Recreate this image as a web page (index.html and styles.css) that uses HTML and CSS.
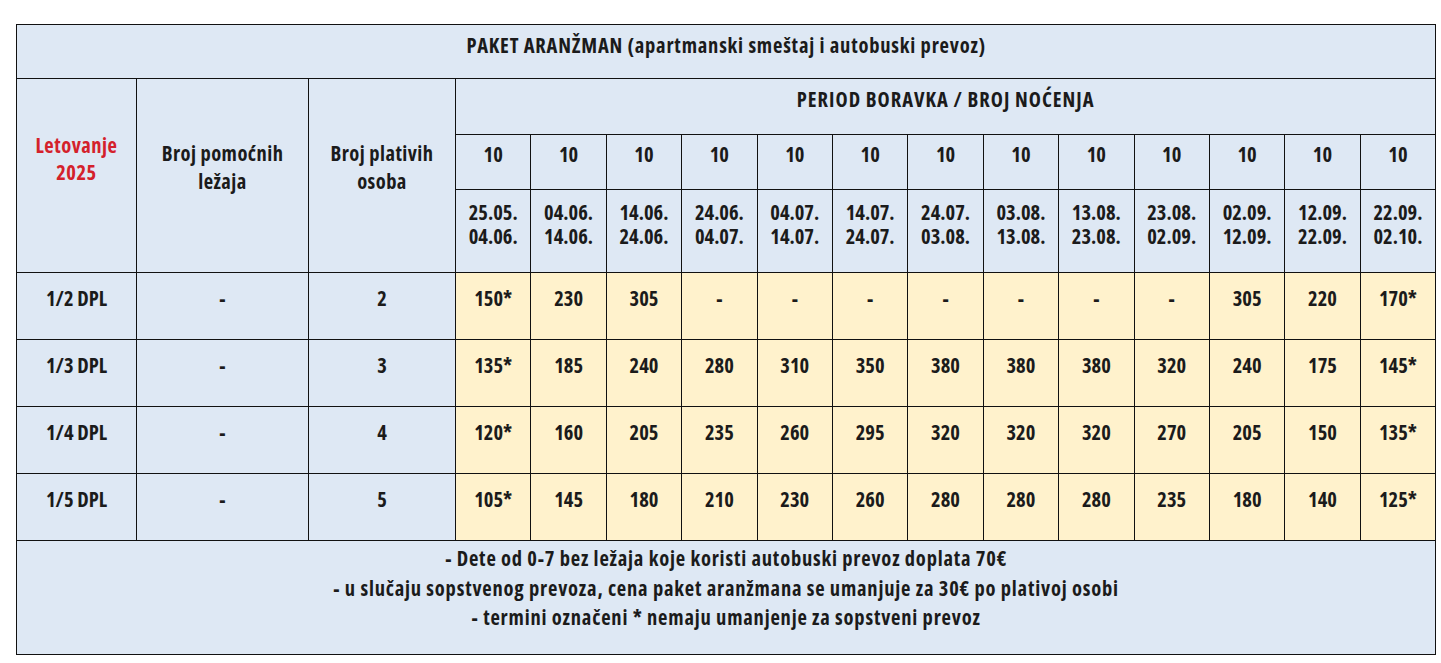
FILE: index.html
```html
<!DOCTYPE html>
<html lang="sr">
<head>
<meta charset="utf-8">
<title>Paket aranžman</title>
<link rel="stylesheet" href="styles.css">
</head>
<body>
<div class="wrap">
<table class="price">
<colgroup>
<col class="c1"><col class="c2"><col class="c3">
<col span="13" class="cd">
</colgroup>
<tbody>
<tr class="r-title"><td colspan="16" class="blue title">PAKET ARANŽMAN (apartmanski smeštaj i autobuski prevoz)</td></tr>
<tr class="r-period">
<td rowspan="3" class="blue red side">Letovanje<br>2025</td>
<td rowspan="3" class="blue side2">Broj pomoćnih<br>ležaja</td>
<td rowspan="3" class="blue side2">Broj plativih<br>osoba</td>
<td colspan="13" class="blue period">PERIOD BORAVKA / BROJ NOĆENJA</td>
</tr>
<tr class="r-nights">
<td class="blue n">10</td><td class="blue n">10</td><td class="blue n">10</td><td class="blue n">10</td><td class="blue n">10</td><td class="blue n">10</td><td class="blue n">10</td><td class="blue n">10</td><td class="blue n">10</td><td class="blue n">10</td><td class="blue n">10</td><td class="blue n">10</td><td class="blue n">10</td>
</tr>
<tr class="r-dates">
<td class="blue d">25.05.<br>04.06.</td><td class="blue d">04.06.<br>14.06.</td><td class="blue d">14.06.<br>24.06.</td><td class="blue d">24.06.<br>04.07.</td><td class="blue d">04.07.<br>14.07.</td><td class="blue d">14.07.<br>24.07.</td><td class="blue d">24.07.<br>03.08.</td><td class="blue d">03.08.<br>13.08.</td><td class="blue d">13.08.<br>23.08.</td><td class="blue d">23.08.<br>02.09.</td><td class="blue d">02.09.<br>12.09.</td><td class="blue d">12.09.<br>22.09.</td><td class="blue d">22.09.<br>02.10.</td>
</tr>
<tr class="r-data">
<td class="blue v">1/2 DPL</td><td class="blue v">-</td><td class="blue v">2</td>
<td class="yel v">150*</td><td class="yel v">230</td><td class="yel v">305</td><td class="yel v">-</td><td class="yel v">-</td><td class="yel v">-</td><td class="yel v">-</td><td class="yel v">-</td><td class="yel v">-</td><td class="yel v">-</td><td class="yel v">305</td><td class="yel v">220</td><td class="yel v">170*</td>
</tr>
<tr class="r-data">
<td class="blue v">1/3 DPL</td><td class="blue v">-</td><td class="blue v">3</td>
<td class="yel v">135*</td><td class="yel v">185</td><td class="yel v">240</td><td class="yel v">280</td><td class="yel v">310</td><td class="yel v">350</td><td class="yel v">380</td><td class="yel v">380</td><td class="yel v">380</td><td class="yel v">320</td><td class="yel v">240</td><td class="yel v">175</td><td class="yel v">145*</td>
</tr>
<tr class="r-data">
<td class="blue v">1/4 DPL</td><td class="blue v">-</td><td class="blue v">4</td>
<td class="yel v">120*</td><td class="yel v">160</td><td class="yel v">205</td><td class="yel v">235</td><td class="yel v">260</td><td class="yel v">295</td><td class="yel v">320</td><td class="yel v">320</td><td class="yel v">320</td><td class="yel v">270</td><td class="yel v">205</td><td class="yel v">150</td><td class="yel v">135*</td>
</tr>
<tr class="r-data">
<td class="blue v">1/5 DPL</td><td class="blue v">-</td><td class="blue v">5</td>
<td class="yel v">105*</td><td class="yel v">145</td><td class="yel v">180</td><td class="yel v">210</td><td class="yel v">230</td><td class="yel v">260</td><td class="yel v">280</td><td class="yel v">280</td><td class="yel v">280</td><td class="yel v">235</td><td class="yel v">180</td><td class="yel v">140</td><td class="yel v">125*</td>
</tr>
<tr class="r-foot">
<td colspan="16" class="blue foot">- Dete od 0-7 bez ležaja koje koristi autobuski prevoz doplata 70€<br>- u slučaju sopstvenog prevoza, cena paket aranžmana se umanjuje za 30€ po plativoj osobi<br>- termini označeni * nemaju umanjenje za sopstveni prevoz</td>
</tr>
</tbody>
</table>
</div>
</body>
</html>
```

FILE: styles.css
```css
html, body {
  margin: 0;
  padding: 0;
  background: #ffffff;
}
.wrap {
  padding: 24px 0 0 16px;
}
.price {
  border-collapse: collapse;
  table-layout: fixed;
  width: 1419px;
  font-family: "Open Sans", "DejaVu Sans Condensed", sans-serif;
  font-stretch: 82%;
  font-weight: 700;
  font-size: 20.5px;
  color: #1b1b1b;
}
.c1 { width: 120px; }
.c2 { width: 172px; }
.c3 { width: 147px; }
.cd { width: 75.4px; }
.price td {
  box-sizing: border-box;
  border: 1px solid #111;
  text-align: center;
  vertical-align: top;
  padding: 0;
  line-height: 24px;
}
.blue { background: #dee8f4; }
.yel { background: #fff2cc; }
.red { color: #d4212b; }
.r-title td { height: 54px; padding-top: 8px; letter-spacing: 0.8px; }
.r-period td.period { height: 56px; padding-top: 8px; letter-spacing: 1px; }
.r-nights td { height: 55px; padding-top: 7px; }
.r-dates td { height: 83px; padding-top: 10px; }
.price td.side { padding-top: 53px; line-height: 27px; letter-spacing: 0.5px; }
.price td.side2 { padding-top: 60px; line-height: 28px; letter-spacing: 0.45px; }
.r-data td { height: 67px; padding-top: 13px; }
.r-foot td { height: 114px; padding-top: 3px; line-height: 29.5px; letter-spacing: 0.8px; }
```
